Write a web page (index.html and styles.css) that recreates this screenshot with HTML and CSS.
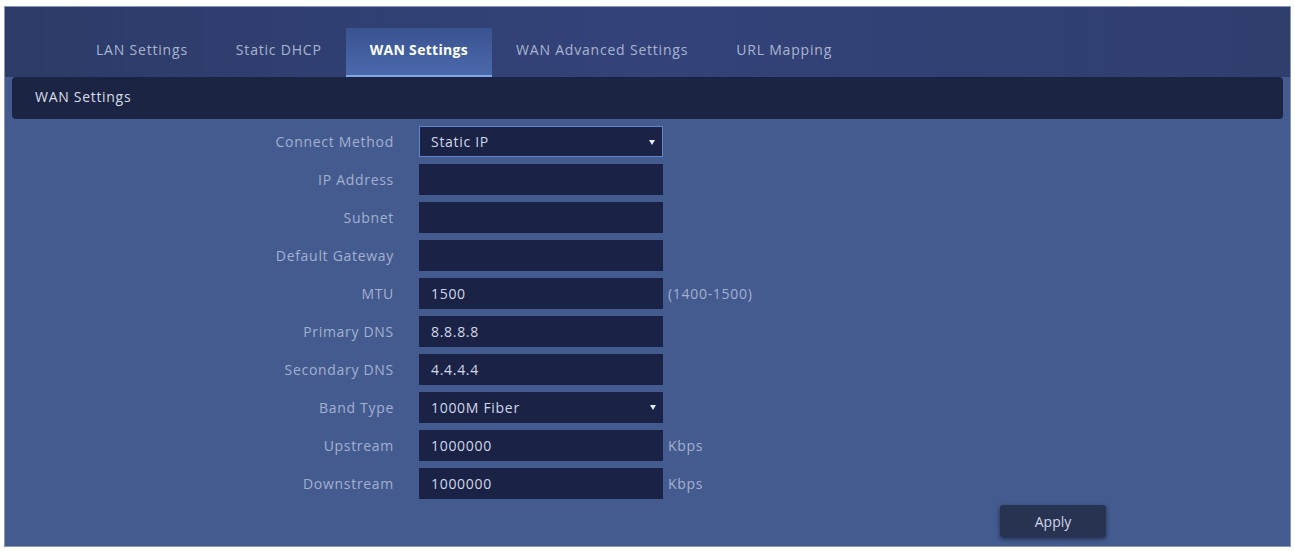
FILE: index.html
```html
<!DOCTYPE html>
<html lang="en">
<head>
    <meta charset="UTF-8">
    <title>WAN Settings</title>
    <link rel="stylesheet" href="styles.css">
</head>
<body>
    <div class="panel">
        <!-- Tabs -->
        <div class="tabs">
            <div class="tab">LAN Settings</div>
            <div class="tab">Static DHCP</div>
            <div class="tab active">WAN Settings</div>
            <div class="tab">WAN Advanced Settings</div>
            <div class="tab">URL Mapping</div>
        </div>

        <div class="section-title">WAN Settings</div>

        <!-- Form -->
        <div class="form">
            <div class="row">
                <div class="label">Connect Method</div>
                <div class="field select focus">Static IP<span class="arrow"></span></div>
            </div>
            <div class="row">
                <div class="label">IP Address</div>
                <div class="field"></div>
            </div>
            <div class="row">
                <div class="label">Subnet</div>
                <div class="field"></div>
            </div>
            <div class="row">
                <div class="label">Default Gateway</div>
                <div class="field"></div>
            </div>
            <div class="row">
                <div class="label">MTU</div>
                <div class="field">1500</div>
                <div class="hint">(1400-1500)</div>
            </div>
            <div class="row">
                <div class="label">Primary DNS</div>
                <div class="field">8.8.8.8</div>
            </div>
            <div class="row">
                <div class="label">Secondary DNS</div>
                <div class="field">4.4.4.4</div>
            </div>
            <div class="row">
                <div class="label">Band Type</div>
                <div class="field select">1000M Fiber<span class="arrow"></span></div>
            </div>
            <div class="row">
                <div class="label">Upstream</div>
                <div class="field">1000000</div>
                <div class="hint">Kbps</div>
            </div>
            <div class="row">
                <div class="label">Downstream</div>
                <div class="field">1000000</div>
                <div class="hint">Kbps</div>
            </div>
        </div>

        <div class="actions">
            <div class="btn">Apply</div>
        </div>
    </div>
</body>
</html>
```

FILE: styles.css
```css
* {
    margin: 0;
    padding: 0;
    box-sizing: border-box;
}

html, body {
    width: 100%;
    height: 100%;
    overflow: hidden;
}

body {
    background: #ffffff;
    padding: 6px 4px 4px 4px;
    font-family: "Open Sans", "Noto Sans", sans-serif;
    font-size: 14px;
    letter-spacing: 0.7px;
}

.panel {
    height: 541px;
    background: #445b8f;
    border: 1px solid #8b96b4;
    display: flex;
    flex-direction: column;
}

/* Tabs */
.tabs {
    height: 70px;
    background: linear-gradient(90deg, #2d3b68, #33437a 50%, #2f3e6d);
    display: flex;
    align-items: flex-end;
    padding-left: 67px;
}

.tab {
    height: 49px;
    padding: 0 24px 6px 24px;
    display: flex;
    align-items: center;
    color: #aab4d0;
    letter-spacing: 0.8px;
}

.tab.active {
    color: #ffffff;
    font-weight: bold;
    letter-spacing: 0.3px;
    background: linear-gradient(180deg, #3a5290, #4b6aab);
    border-bottom: 2px solid #7fa6e6;
    padding-bottom: 4px;
}

.section-title {
    height: 42px;
    margin: 0 7px;
    background: #1b2443;
    border-radius: 4px;
    color: #d9deea;
    display: flex;
    align-items: center;
    padding: 0 0 3px 23px;
}

/* Form */
.form {
    display: flex;
    flex-direction: column;
    gap: 7px;
    padding-top: 7px;
}

.row {
    display: flex;
    align-items: center;
    height: 31px;
}

.label {
    width: 414px;
    text-align: right;
    color: #a3b0cf;
    padding-right: 25px;
}

.field {
    width: 244px;
    height: 31px;
    background: #1a2246;
    color: #d3d8e6;
    padding-left: 12px;
    display: flex;
    align-items: center;
    position: relative;
}

.field.focus {
    border: 1px solid #5f86cf;
    padding-left: 11px;
}

.arrow {
    position: absolute;
    right: 7px;
    top: 13px;
    border-left: 3px solid transparent;
    border-right: 3px solid transparent;
    border-top: 5px solid #e6e9f2;
}

.hint {
    color: #a3b0cf;
    padding-left: 5px;
}

.actions {
    display: flex;
    padding: 6px 0 0 995px;
}

.btn {
    width: 106px;
    height: 32px;
    background: #283351;
    color: #cfd5e3;
    letter-spacing: 0;
    border-radius: 3px;
    box-shadow: 0 2px 4px rgba(10, 15, 35, 0.6);
    display: flex;
    align-items: center;
    justify-content: center;
}
```
